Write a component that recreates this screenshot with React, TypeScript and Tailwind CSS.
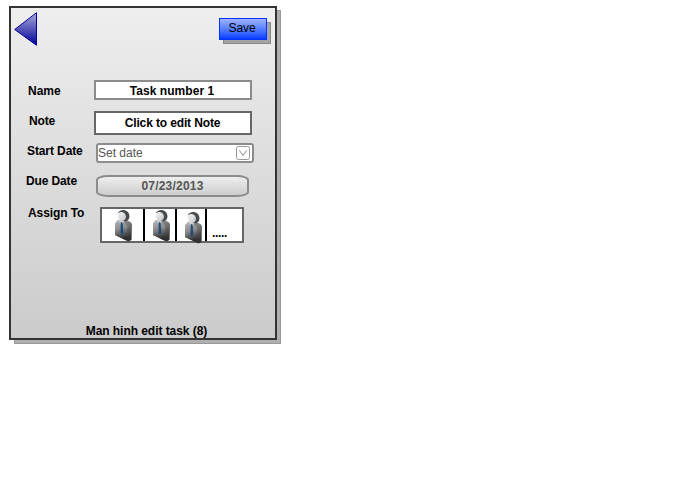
import type { ReactNode } from "react";

function Person({ className }: { className: string }) {
  return (
    <svg className={className} width="20" height="34" viewBox="0 0 20 34">
      <defs>
        <linearGradient id="body" x1="0" y1="0" x2="0.3" y2="1">
          <stop offset="0" stopColor="#a0a0a0" />
          <stop offset="0.5" stopColor="#6c6c6c" />
          <stop offset="1" stopColor="#303030" />
        </linearGradient>
        <linearGradient id="suit" x1="0" y1="0" x2="0.2" y2="1">
          <stop offset="0" stopColor="#bcbcbc" />
          <stop offset="0.5" stopColor="#8a8a8a" />
          <stop offset="1" stopColor="#2c2c2c" />
        </linearGradient>
        <linearGradient id="face" x1="0" y1="0" x2="1" y2="1">
          <stop offset="0" stopColor="#f4f4f4" />
          <stop offset="1" stopColor="#c6c6c6" />
        </linearGradient>
      </defs>
      <path d="M5 11 L13 11 L17.5 13 L19 15 L18.5 31 L15.5 32.5 L11 30.5 L2 26 L2 14.5Z" fill="url(#body)" />
      <path d="M5 11 L9 11.5 L14.5 17 L14 31.5 L2 26 L2 14.5Z" fill="url(#suit)" />
      <path d="M5 3.5 Q7 0.5 11 1 Q16 2 16.5 7 Q16.5 11 13 12.5 L9 11Z" fill="#484b4d" />
      <path d="M4.8 4.5 Q7.5 2.2 10.5 3.5 Q13.5 5.5 12.8 9 Q12 11.8 9 12 Q5.5 11.5 4.8 8Z" fill="url(#face)" />
      <path d="M5.5 10.5 L11 12 L9.5 15 L7 14Z" fill="#d2d2d2" />
      <path d="M7.8 13 L9.6 13.5 L10.2 23.5 L9 26 L7.5 24Z" fill="#1c4a7c" />
    </svg>
  );
}

function Row({ label, labelClass, className, children }: { label: string; labelClass: string; className: string; children: ReactNode }) {
  return (
    <div className={`flex items-start ${className}`}>
      <span className={`shrink-0 whitespace-nowrap font-bold ${labelClass}`}>{label}</span>
      {children}
    </div>
  );
}

export default function App() {
  return (
    <div className="h-[483px] w-[683px] overflow-hidden bg-white pt-[6px] pl-[9px] font-['Liberation_Sans',Arial,sans-serif] text-[12px] leading-[14px] text-black">
      <div className="relative h-[334px] w-[268px]">
        <div className="absolute top-[4px] left-[5px] h-[334px] w-[267px] border border-[#999] bg-[#b0aeae]" />
        <main className="relative flex h-[334px] w-[268px] flex-col border-2 border-[#333] bg-linear-to-b from-[#eeeeee] to-[#cbcbcb]">
          <header className="flex h-[72px] shrink-0 items-start justify-between pr-[8px] pl-[3px]">
            <svg className="mt-[4px]" width="24" height="34" viewBox="0 0 24 34">
              <defs>
                <linearGradient id="back" x1="0" y1="0" x2="0" y2="1">
                  <stop offset="0" stopColor="#aaaadb" />
                  <stop offset="1" stopColor="#000099" />
                </linearGradient>
              </defs>
              <path d="M0.7 17.5 L22.5 0.7 V33.3Z" fill="url(#back)" stroke="#000099" />
            </svg>
            <button className="mt-[10px] h-[22px] w-[48px] border border-[#0033ff] bg-linear-to-b from-[#a0b1ff] to-[#0839ff] pr-[2px] pb-[2px] tracking-[-0.1px] shadow-[4px_4px_0_-1px_#a4a4a4,4px_4px_0_0_#888]">
              Save
            </button>
          </header>
          <Row label="Name" labelClass="ml-[17px] mt-[4px] w-[66px]" className="h-[20px]">
            <div className="h-[20px] w-[158px] border-2 border-[#8c8c8c] bg-white pt-[2px] pr-[2px] text-center font-bold tracking-[0.05px]">Task number 1</div>
          </Row>
          <Row label="Note" labelClass="ml-[18px] mt-[3px] w-[65px] tracking-[-0.15px]" className="mt-[11px] h-[24px]">
            <div className="h-[24px] w-[158px] border-2 border-[#666] bg-white pt-[3px] pr-px text-center font-bold tracking-[-0.13px]">Click to edit Note</div>
          </Row>
          <Row label="Start Date" labelClass="ml-[16px] mt-[1px] w-[69px] tracking-[-0.1px]" className="mt-[8px] h-[20px]">
            <div className="flex h-[20px] w-[158px] items-start justify-between rounded-[3px] border-2 border-[#8c8c8c] bg-white pr-[2px] text-[#555]">
              <span className="mt-px">Set date</span>
              <svg className="mt-px" width="14" height="14" viewBox="0 0 14 14" fill="none">
                <rect x="0.5" y="0.5" width="13" height="13" rx="2" stroke="#999" />
                <path d="M3.5 4.5 L7 9.5 L10.5 4.5" stroke="#888" />
              </svg>
            </div>
          </Row>
          <Row label="Due Date" labelClass="ml-[15px] -mt-[1px] w-[70px] tracking-[-0.13px]" className="mt-[12px] h-[22px]">
            <div className="h-[22px] w-[153px] rounded-[12px/5px] border-2 border-[#8c8c8c] bg-linear-to-b from-[#eeeeee] to-[#cdcdcd] pt-[2px] text-center font-bold tracking-[0.2px] text-[#555]">
              07/23/2013
            </div>
          </Row>
          <Row label="Assign To" labelClass="ml-[17px] -mt-[1px] w-[72px] tracking-[-0.1px]" className="mt-[10px] h-[36px]">
            <div className="flex h-[36px] w-[144px] border-2 border-[#666] bg-white">
              <div className="w-[43px] shrink-0 border-r-2 border-black pl-[11px]"><Person className="" /></div>
              <div className="w-[32px] shrink-0 border-r-2 border-black pl-[6px]"><Person className="" /></div>
              <div className="w-[30px] shrink-0 border-r-2 border-black pl-[6px]"><Person className="mt-[2px]" /></div>
              <div className="pt-[17px] pl-[5px] font-bold tracking-[-0.33px]">.....</div>
            </div>
          </Row>
          <footer className="mt-[81px] pl-[7px] text-center font-bold tracking-[-0.05px] whitespace-nowrap">Man hinh edit task (8)</footer>
        </main>
      </div>
    </div>
  );
}
